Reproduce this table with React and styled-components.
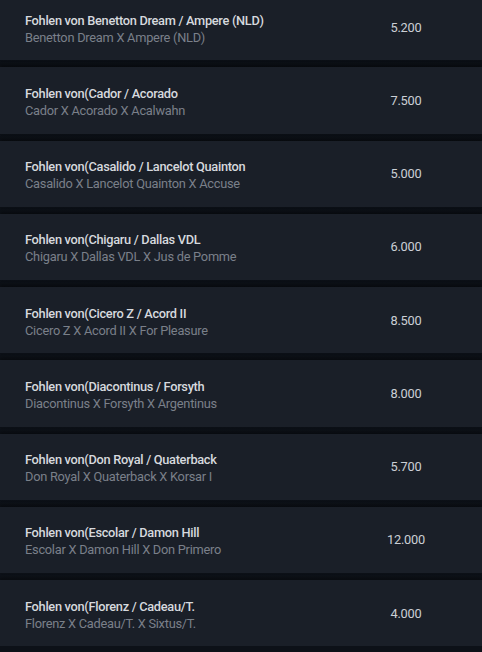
import styled, { createGlobalStyle } from "styled-components";

const GlobalStyle = createGlobalStyle`
  html, body {
    margin: 0;
    padding: 0;
    background: #0d1118;
    overflow: hidden;
  }
  body {
    font-family: Roboto, "Liberation Sans", sans-serif;
  }
`;

// Dark list background shows through the gaps as row separators
const List = styled.ul`
  list-style: none;
  margin: -6px 0 0 0;
  padding: 0;
  display: flex;
  flex-direction: column;
  gap: 7px;
  background: linear-gradient(#0b0f15, #0d1118);
`;

const Row = styled.li`
  height: 66.25px;
  display: grid;
  grid-template-columns: 1fr 152px;
  align-items: center;
  padding-left: 25px;
  background: #1a1f28;
  box-shadow: 0 -2px 3px rgba(0, 0, 0, 0.35);
`;

const Info = styled.div`
  display: flex;
  flex-direction: column;
  gap: 1px;
  margin-top: 4px;
  white-space: nowrap;
  overflow: hidden;
`;

const Title = styled.span`
  font-size: 12.8px;
  line-height: 16px;
  font-weight: 500;
  color: #d6d9de;
  letter-spacing: -0.3px;
`;

const Subtitle = styled.span`
  font-size: 12.8px;
  line-height: 16px;
  color: #7a808a;
  letter-spacing: -0.25px;
`;

const Price = styled.span`
  text-align: center;
  font-size: 12.8px;
  color: #cbcfd5;
  letter-spacing: -0.2px;
`;

const items = [
  { title: "Fohlen von Benetton Dream / Ampere (NLD)", sub: "Benetton Dream X Ampere (NLD)", price: "5.200" },
  { title: "Fohlen von(Cador / Acorado", sub: "Cador X Acorado X Acalwahn", price: "7.500" },
  { title: "Fohlen von(Casalido / Lancelot Quainton", sub: "Casalido X Lancelot Quainton X Accuse", price: "5.000" },
  { title: "Fohlen von(Chigaru / Dallas VDL", sub: "Chigaru X Dallas VDL X Jus de Pomme", price: "6.000" },
  { title: "Fohlen von(Cicero Z / Acord II", sub: "Cicero Z X Acord II X For Pleasure", price: "8.500" },
  { title: "Fohlen von(Diacontinus / Forsyth", sub: "Diacontinus X Forsyth X Argentinus", price: "8.000" },
  { title: "Fohlen von(Don Royal / Quaterback", sub: "Don Royal X Quaterback X Korsar I", price: "5.700" },
  { title: "Fohlen von(Escolar / Damon Hill", sub: "Escolar X Damon Hill X Don Primero", price: "12.000" },
  { title: "Fohlen von(Florenz / Cadeau/T.", sub: "Florenz X Cadeau/T. X Sixtus/T.", price: "4.000" },
];

const App = () => (
  <>
    <GlobalStyle />
    <List>
      {items.map((item) => (
        <Row key={item.title}>
          <Info>
            <Title>{item.title}</Title>
            <Subtitle>{item.sub}</Subtitle>
          </Info>
          <Price>{item.price}</Price>
        </Row>
      ))}
    </List>
  </>
);

export default App;
